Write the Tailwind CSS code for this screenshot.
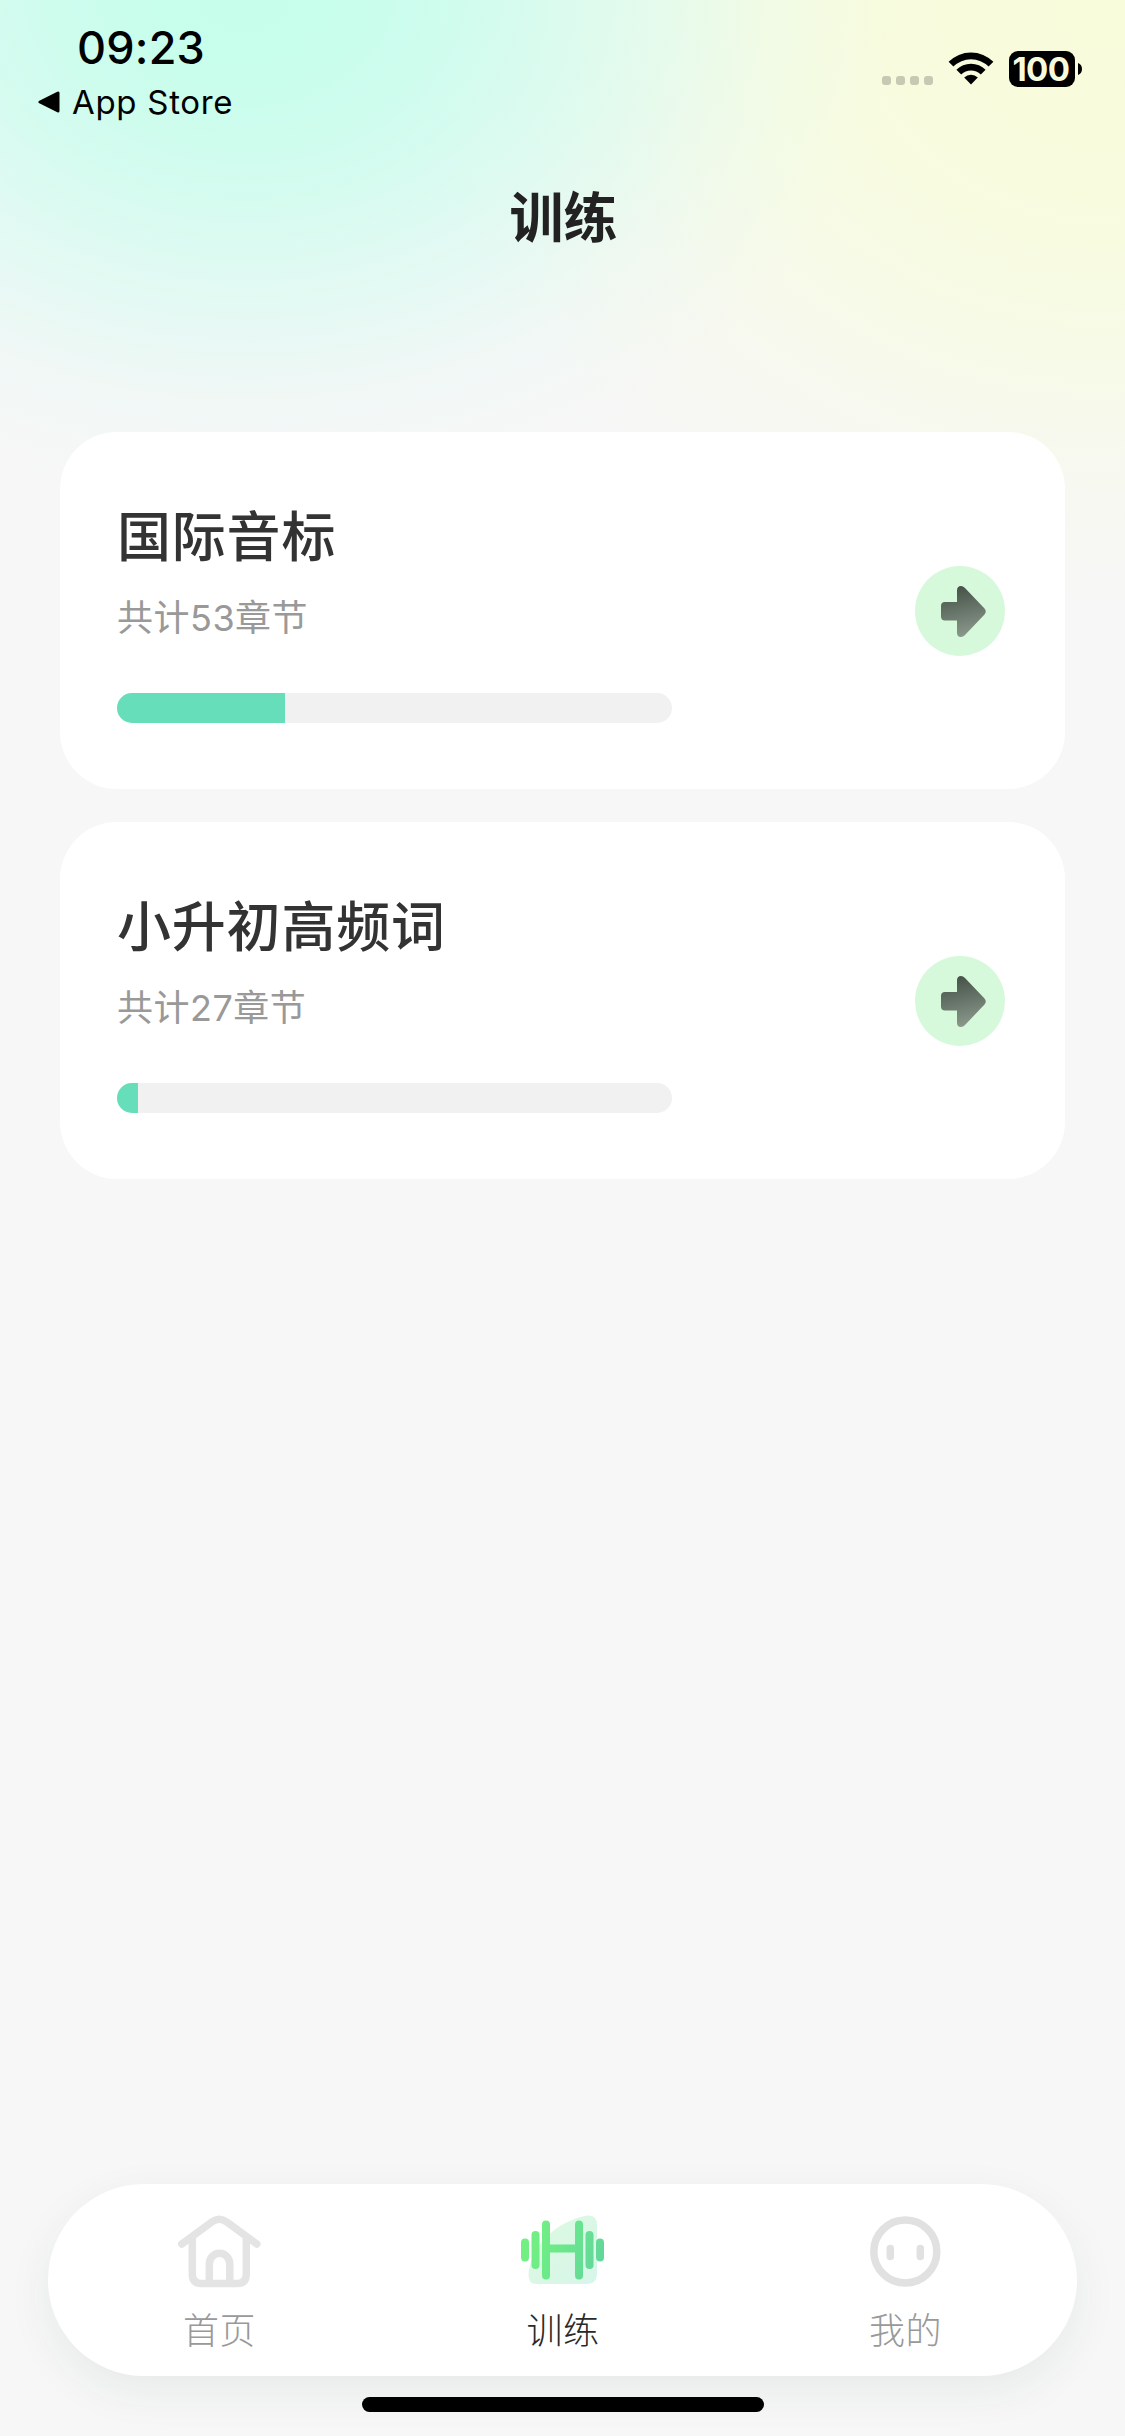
<!DOCTYPE html>
<html lang="zh-CN">
<head>
<meta charset="utf-8">
<title>训练</title>
<script src="https://cdn.jsdelivr.net/npm/@tailwindcss/browser@4"></script>
</head>
<body class="bg-[#f7f7f7]">
<div class="relative flex h-[2436px] w-[1125px] flex-col overflow-hidden bg-[#f7f7f7] bg-[radial-gradient(ellipse_650px_510px_at_245px_-10px,#c6feeb_0%,rgba(198,254,235,0.96)_15%,rgba(199,253,236,0.82)_33%,rgba(203,252,238,0.5)_58%,rgba(213,250,240,0.2)_80%,rgba(247,247,247,0)_100%),radial-gradient(ellipse_700px_600px_at_1110px_0px,#f8fcda_0%,rgba(248,252,219,0.92)_28%,rgba(248,252,220,0.76)_48%,rgba(248,251,224,0.34)_77%,rgba(247,247,247,0)_100%)] font-['Noto_Sans_CJK_SC',sans-serif]">

  <!-- Status bar -->
  <header class="flex h-[132px] shrink-0 items-start justify-between pl-[38px] pr-[43px] font-['Inter',sans-serif] text-black">
    <div class="flex flex-col pt-[25px]">
      <div class="pl-[39px] text-[45px] font-medium leading-[45px] tracking-[0.2px]">09:23</div>
      <div class="mt-[15px] flex items-center">
        <svg class="h-[22px] w-[22px]" viewBox="0 0 22 22"><path d="M2 11 L20 2 V20 Z" stroke="#000" stroke-width="3" stroke-linejoin="round"/></svg>
        <span class="ml-3 text-[33px] font-normal leading-[34px] tracking-[0.7px]">App Store</span>
      </div>
    </div>
    <div class="flex pt-[51px]">
      <div class="mt-[25px] flex gap-[5px]">
        <i class="size-[9px] rounded-[3px] bg-[#c6cab2]"></i><i class="size-[9px] rounded-[3px] bg-[#c6cab2]"></i><i class="size-[9px] rounded-[3px] bg-[#c6cab2]"></i><i class="size-[9px] rounded-[3px] bg-[#c6cab2]"></i>
      </div>
      <svg class="ml-[15px] mt-px h-[34px] w-[46px]" viewBox="0 0 46 34">
        <path d="M0.6 9.8 A31.5 31.5 0 0 1 45.4 9.8 L40.6 14.6 A25 25 0 0 0 5.4 14.6 Z"/>
        <path d="M8.4 17.7 A20.6 20.6 0 0 1 37.6 17.7 L32.8 22.5 A14 14 0 0 0 13.2 22.5 Z"/>
        <path d="M16.2 25.6 A9.7 9.7 0 0 1 29.8 25.6 L23 32.6 Z"/>
      </svg>
      <div class="ml-[15px] flex h-9 w-[66px] items-center justify-center rounded-[9px] bg-black pr-[2px] text-[33px] font-bold leading-9 tracking-[-0.5px] text-[#f7fbdd]">100</div>
      <svg class="ml-[3px] mt-3 h-3 w-1" viewBox="0 0 4 12"><path d="M0 0 Q4 1.5 4 6 T0 12 Z"/></svg>
    </div>
  </header>

  <h1 class="mt-[56px] pl-[2px] text-center text-[54px] font-bold leading-[54px] text-[#222]">训练</h1>

  <main class="mt-[190px] flex flex-col gap-[33px] px-[60px]">
    <section class="flex h-[357px] items-center justify-between rounded-[57px] bg-white pl-[57px] pr-[60px]">
      <div class="flex h-full flex-col pt-[75px]">
        <h2 class="text-[54px] font-medium leading-[54px] tracking-[0.8px] text-[#333]">国际音标</h2>
        <p class="mt-[39px] font-['Inter','Noto_Sans_CJK_SC',sans-serif] text-[36px] leading-[36px] tracking-[0.5px] text-[#999]">共计53章节</p>
        <div class="mt-[57px] h-[30px] w-[555px] overflow-hidden rounded-full bg-[#f1f1f1]"><div class="h-full bg-[#66deba]" style="width:30.19%"></div></div>
      </div>
      <svg class="size-[90px]" viewBox="0 0 90 90">
        <defs><linearGradient id="arrow" x1="0.4" y1="0" x2="0.6" y2="1"><stop stop-color="#465247"/><stop offset="1" stop-color="#8c9a8e"/></linearGradient></defs>
        <circle cx="45" cy="45" r="45" fill="#d7f9db"/>
        <path d="M30 36 H42 V24.500 Q42 20 46 20 Q48 20 50 22 L69.500 42.500 Q72 45.500 69.500 48.500 L50 69 Q48 71 46 71 Q42 71 42 66.500 V54.500 H30 Q26 54.500 26 50.500 V40 Q26 36 30 36 Z" fill="url(#arrow)"/>
      </svg>
    </section>

    <section class="flex h-[357px] items-center justify-between rounded-[57px] bg-white pl-[57px] pr-[60px]">
      <div class="flex h-full flex-col pt-[75px]">
        <h2 class="text-[54px] font-medium leading-[54px] tracking-[0.8px] text-[#333]">小升初高频词</h2>
        <p class="mt-[39px] font-['Inter','Noto_Sans_CJK_SC',sans-serif] text-[36px] leading-[36px] tracking-[0.5px] text-[#999]">共计27章节</p>
        <div class="mt-[57px] h-[30px] w-[555px] overflow-hidden rounded-full bg-[#f1f1f1]"><div class="h-full bg-[#66deba]" style="width:3.7%"></div></div>
      </div>
      <svg class="size-[90px]" viewBox="0 0 90 90">
        <circle cx="45" cy="45" r="45" fill="#d7f9db"/>
        <path d="M30 36 H42 V24.500 Q42 20 46 20 Q48 20 50 22 L69.500 42.500 Q72 45.500 69.500 48.500 L50 69 Q48 71 46 71 Q42 71 42 66.500 V54.500 H30 Q26 54.500 26 50.500 V40 Q26 36 30 36 Z" fill="url(#arrow)"/>
      </svg>
    </section>
  </main>

  <!-- Tab bar -->
  <nav class="mx-12 mt-auto grid h-[192px] shrink-0 grid-cols-3 rounded-full bg-white text-[36px] font-light leading-[36px] tracking-[0.6px] text-[#999] shadow-[0_15px_45px_rgba(30,60,50,0.07)]">
    <a class="flex flex-col items-center pt-[21px]">
      <svg class="size-[90px]" viewBox="0.7 0 90 90" fill="none" stroke="#e4e4e4" stroke-width="7.5" stroke-linecap="round" stroke-linejoin="round">
        <path d="M7.500 39 L37.500 17 Q45 11.500 52.500 17 L82.500 39"/>
        <path d="M18 32 V69 Q18 78.500 27.500 78.500 H62.500 Q72 78.500 72 69 V32"/>
        <path d="M35 77 V59 A10.200 10.800 0 0 1 55.500 59 V77"/>
      </svg>
      <span class="mt-[15px]">首页</span>
    </a>
    <a class="flex flex-col items-center pt-[21px] text-[#2a2a2a]">
      <svg class="size-[90px]" viewBox="0.5 0 90 90" fill="none">
        <defs>
          <linearGradient id="bell" gradientUnits="userSpaceOnUse" x1="4" y1="30" x2="87" y2="60"><stop stop-color="#75f180"/><stop offset="0.45" stop-color="#6be98a"/><stop offset="1" stop-color="#62d49c"/></linearGradient>
          <linearGradient id="plate" x1="0" y1="0" x2="1" y2="1"><stop stop-color="#dbfadf"/><stop offset="1" stop-color="#d8f5ea"/></linearGradient>
        </defs>
        <path d="M11 69 C13 42 38 16 70 10.500 Q79.500 10 79.500 20 V68 Q79.500 79 69 79 H19 Q10.500 79 11 69 Z" fill="url(#plate)"/>
        <g stroke="url(#bell)" stroke-width="8" stroke-linecap="round">
          <path d="M7.500 37.500 L7.510 52.500"/><path d="M18 30 L18.010 60"/><path d="M28.500 19.500 L28.510 70.500"/>
          <path d="M61.500 19.500 L61.510 70.500"/><path d="M72 30 L72.010 60"/><path d="M82.500 37.500 L82.510 52.500"/>
          <path d="M29 43.500 L61 43.510"/>
        </g>
      </svg>
      <span class="mt-[15px] pl-[1px]">训练</span>
    </a>
    <a class="flex flex-col items-center pt-[21px]">
      <svg class="size-[90px]" viewBox="0.7 0 90 90" fill="none" stroke="#e1e1e1" stroke-width="7.500" stroke-linecap="round">
        <circle cx="45" cy="46.500" r="31.500"/><path d="M30 43.500 V51.500 M60 43.500 V51.500"/>
      </svg>
      <span class="mt-[15px]">我的</span>
    </a>
  </nav>
  <div class="mx-auto mb-6 mt-[21px] h-[15px] w-[402px] shrink-0 rounded-full bg-black"></div>
</div>
</body>
</html>
